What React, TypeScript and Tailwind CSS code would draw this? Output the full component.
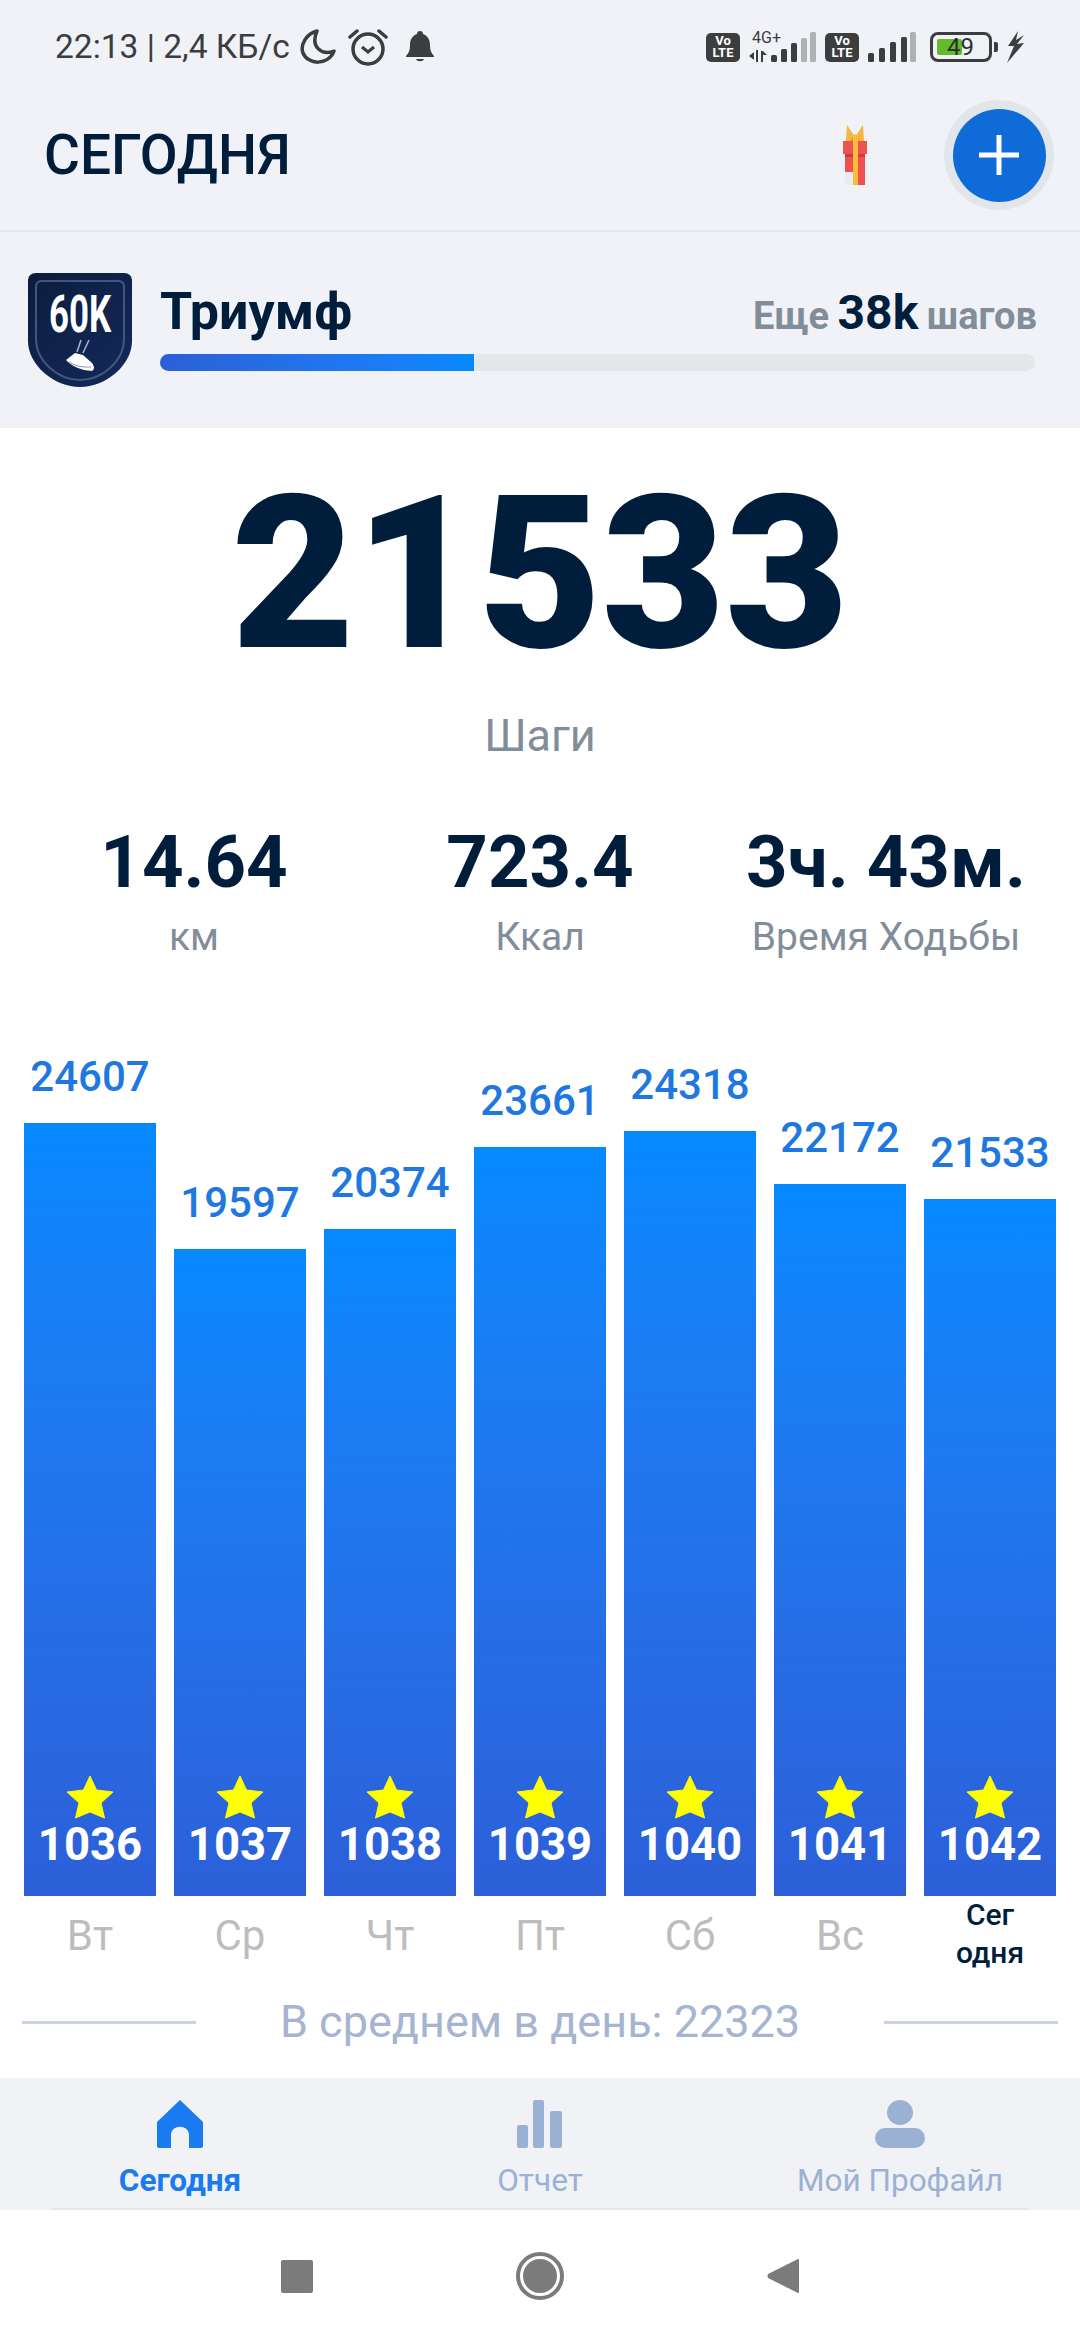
const days = [
  { value: 24607, height: 773, num: 1036, label: "Вт" },
  { value: 19597, height: 647, num: 1037, label: "Ср" },
  { value: 20374, height: 667, num: 1038, label: "Чт" },
  { value: 23661, height: 749, num: 1039, label: "Пт" },
  { value: 24318, height: 765, num: 1040, label: "Сб" },
  { value: 22172, height: 712, num: 1041, label: "Вс" },
  { value: 21533, height: 697, num: 1042, label: "" },
];

const stats = [
  { value: "14.64", label: "км" },
  { value: "723.4", label: "Ккал" },
  { value: "3ч. 43м.", label: "Время Ходьбы" },
];

function VoLte() {
  return (
    <div className="flex h-[29px] w-[34px] flex-col items-center justify-center rounded-[5px] bg-[#3c3d3f] text-[13px] leading-[12px] font-bold text-white">
      <span>Vo</span>
      <span>LTE</span>
    </div>
  );
}

function Signal() {
  const bars = [
    { x: 0, h: 9, fill: "#3c3d3f" },
    { x: 11, h: 14, fill: "#3c3d3f" },
    { x: 22, h: 20, fill: "#3c3d3f" },
    { x: 33, h: 25, fill: "#3c3d3f" },
    { x: 42, h: 30, fill: "#b0b1b3" },
  ];
  return (
    <svg width="48" height="30" viewBox="0 0 48 30">
      {bars.map((b) => (
        <rect key={b.x} x={b.x} y={30 - b.h} width="6" height={b.h} rx="1.5" fill={b.fill} />
      ))}
    </svg>
  );
}

function StatusBar() {
  return (
    <div className="flex h-[92px] items-center pt-[2px] pl-[55px] text-[#3c3d3f]">
      <span className="w-[245px] text-[33.5px] leading-none">22:13 | 2,4 КБ/с</span>
      <svg width="36" height="36" viewBox="0 0 36 36" fill="none">
        <path
          d="M17 2 C6 5 0 16 3 24 C8 36 28 37 34 22 C22 27 10 18 17 2 Z"
          stroke="#3c3d3f"
          strokeWidth="3.5"
          strokeLinejoin="round"
        />
      </svg>
      <svg className="ml-[12px]" width="40" height="38" viewBox="0 0 40 38" fill="none">
        <circle cx="20" cy="21" r="15" stroke="#3c3d3f" strokeWidth="3.5" />
        <path d="M14 19 L20 24 L26 19" stroke="#3c3d3f" strokeWidth="3" />
        <path d="M2 9 L9 3 M38 9 L31 3" stroke="#3c3d3f" strokeWidth="3.5" strokeLinecap="round" />
      </svg>
      <svg className="ml-[18px]" width="28" height="32" viewBox="0 0 28 32">
        <path
          d="M14 0 C16 0 17 1 17 3 C22 5 24 9 24 14 C24 19 25 22 28 25 L28 26 L0 26 L0 25 C3 22 4 19 4 14 C4 9 6 5 11 3 C11 1 12 0 14 0 Z M10 28 L18 28 C17 31 11 31 10 28 Z"
          fill="#3c3d3f"
        />
      </svg>
      <div className="ml-auto flex items-center pr-[55px]">
        <VoLte />
        <div className="relative ml-[9px] h-[30px] w-[67px]">
          <span className="absolute -top-[2px] left-[3px] text-[16px] leading-none">4G+</span>
          <svg className="absolute bottom-0 left-0" width="22" height="12" viewBox="0 0 22 12">
            <path d="M0 6 L5 2 L5 10 Z M7 0 L9 0 L9 12 L7 12 Z M12 1 L14 1 L18 5 L14 5 L14 12 L12 12 Z" fill="#3c3d3f" />
          </svg>
          <svg className="absolute right-0 bottom-0" width="45" height="30" viewBox="0 0 45 30">
            <rect x="0" y="23" width="6" height="7" rx="1.5" fill="#3c3d3f" />
            <rect x="10" y="17" width="6" height="13" rx="1.5" fill="#3c3d3f" />
            <rect x="20" y="11" width="6" height="19" rx="1.5" fill="#3c3d3f" />
            <rect x="30" y="6" width="6" height="24" rx="1.5" fill="#b0b1b3" />
            <rect x="39" y="0" width="6" height="30" rx="1.5" fill="#b0b1b3" />
          </svg>
        </div>
        <div className="ml-[9px]">
          <VoLte />
        </div>
        <div className="ml-[9px] flex">
          <Signal />
        </div>
        <div className="relative ml-[14px] h-[30px] w-[62px] rounded-[8px] border-[3px] border-[#3c3d3f]">
          <div className="absolute top-[4px] bottom-[4px] left-[4px] w-[25px] rounded-[2px] bg-[#62bb2c]" />
          <span className="absolute top-0 left-[14px] text-[24px] leading-[24px] text-[#2d2e30]">49</span>
        </div>
        <div className="ml-[2px] h-[10px] w-[4px] rounded-r-[2px] bg-[#3c3d3f]" />
        <svg className="ml-[9px]" width="18" height="32" viewBox="0 0 18 32">
          <path d="M11 0 L1 15 L7 15 L0 32 L17 12 L10 13 L17 4 L9 9 Z" fill="#3c3d3f" />
        </svg>
      </div>
    </div>
  );
}

function Gift() {
  return (
    <svg width="24" height="60" viewBox="0 0 24 60">
      <path d="M3 16 L4 0 L12 12 L20 0 L21 16 Z" fill="#f4b63d" />
      <path d="M7 17 L12 9 L17 17 Z" fill="#e0932c" />
      <rect x="2" y="23" width="20" height="37" fill="#f0504f" />
      <rect x="0" y="16" width="24" height="13" fill="#ee5253" />
      <rect x="2" y="29" width="20" height="3" fill="#c93c3f" />
      <rect x="10" y="10" width="5" height="50" fill="#f8bd3a" />
      <rect x="2" y="47" width="8" height="13" fill="#e9ecef" />
    </svg>
  );
}

function Badge() {
  return (
    <div className="relative h-[114px] w-[104px] shrink-0">
      <svg width="104" height="114" viewBox="0 0 104 114">
        <defs>
          <linearGradient id="shield" x1="0" y1="0" x2="1" y2="1">
            <stop offset="0" stopColor="#0b1d3d" />
            <stop offset="1" stopColor="#14295c" />
          </linearGradient>
        </defs>
        <path
          d="M8 0 L96 0 C101 0 104 3 104 8 L104 68 C104 92 78 114 52 114 C26 114 0 92 0 68 L0 8 C0 3 3 0 8 0 Z"
          fill="url(#shield)"
        />
        <path
          d="M14 8 L90 8 C94 8 96 10 96 14 L96 66 C96 88 74 107 52 107 C30 107 8 88 8 66 L8 14 C8 10 10 8 14 8 Z"
          fill="none"
          stroke="#46567a"
          strokeWidth="2"
        />
        <path d="M47 80 L55 82 L64 90 Q68 95 64 98 L56 97 Q44 94 38 87 Z" fill="#ffffff" />
        <path d="M41 89 Q50 95 63 94" fill="none" stroke="#8a96b0" strokeWidth="1" />
        <path d="M49 79 L53 67 M55 80 L61 67" stroke="#aeb6c8" strokeWidth="1.5" />
      </svg>
      <div className="absolute top-[10px] left-0 w-full scale-x-[0.67] text-center text-[52px] leading-[64px] font-bold text-white">
        60K
      </div>
    </div>
  );
}

function Star() {
  return (
    <svg width="48" height="44" viewBox="0 0 48 44">
      <path
        d="M24 1 L30.5 15 L47 17 L35 28 L38.5 43 L24 37 L9.5 43 L13 28 L1 17 L17.5 15 Z"
        fill="#ffff00"
        stroke="#ffff00"
        strokeWidth="1"
        strokeLinejoin="round"
      />
    </svg>
  );
}

function Chart() {
  return (
    <div className="flex h-[846px] items-end gap-[18px] px-[24px]">
      {days.map((d) => (
        <div key={d.num} className="flex w-[132px] flex-col items-center">
          <span className="mb-[14px] text-[42px] leading-[64px] font-medium text-[#1f78e0]">{d.value}</span>
          <div
            className="flex w-full flex-col items-center justify-end bg-gradient-to-b from-[#0589ff] to-[#2c5fd8] pb-[25px]"
            style={{ height: d.height }}
          >
            <Star />
            <span className="text-[45.5px] leading-[52px] font-bold text-white">{d.num}</span>
          </div>
        </div>
      ))}
    </div>
  );
}

function Nav() {
  return (
    <nav className="relative grid h-[132px] grid-cols-3 bg-[#f0f2f5] pt-[22px]">
      <div className="flex flex-col items-center">
        <svg width="48" height="48" viewBox="0 0 48 48">
          <path
            d="M24 0 L47 22 L47 46 Q47 48 45 48 L33 48 L33 35 C33 24 15 24 15 35 L15 48 L3 48 Q1 48 1 46 L1 22 Z"
            fill="#1a7af0"
          />
        </svg>
        <span className="mt-[11px] text-[31.5px] leading-[44px] font-bold text-[#1a7af0]">Сегодня</span>
      </div>
      <div className="flex flex-col items-center">
        <svg width="46" height="48" viewBox="0 0 46 48" fill="#9bb1d3">
          <rect x="0" y="25" width="11" height="23" rx="2" />
          <rect x="16" y="0" width="11" height="48" rx="2" />
          <rect x="33" y="11" width="12" height="37" rx="2" />
        </svg>
        <span className="mt-[11px] text-[31.5px] leading-[44px] text-[#9bb1d3]">Отчет</span>
      </div>
      <div className="flex flex-col items-center">
        <svg width="50" height="48" viewBox="0 0 50 48" fill="#9bb1d3">
          <ellipse cx="25" cy="12.5" rx="13" ry="12.5" />
          <rect x="0" y="28" width="50" height="20" rx="10" />
        </svg>
        <span className="mt-[11px] text-[31.5px] leading-[44px] text-[#9bb1d3]">Мой Профайл</span>
      </div>
      <div className="absolute right-[52px] bottom-0 left-[52px] h-[2px] bg-[#e4e6e9]" />
    </nav>
  );
}

export default function App() {
  return (
    <div className="flex h-[2340px] w-[1080px] flex-col bg-white font-['Roboto',sans-serif]">
      <div className="bg-[#f0f2f7]">
        <StatusBar />
        <header className="flex h-[140px] items-center border-b-2 border-[#e6e8ec] pb-[12px] pl-[44px]">
          <h1 className="text-[55px] leading-none font-medium text-[#001e3c]">СЕГОДНЯ</h1>
          <div className="mr-[26px] ml-auto flex items-center gap-[77px]">
            <Gift />
            <div className="flex h-[110px] w-[110px] items-center justify-center rounded-full bg-[#e2e5ea]">
              <div className="flex h-[93px] w-[93px] items-center justify-center rounded-full bg-[#0e6bd8]">
                <svg width="40" height="40" viewBox="0 0 40 40">
                  <path d="M20 0 L20 40 M0 20 L40 20" stroke="#ffffff" strokeWidth="5" />
                </svg>
              </div>
            </div>
          </div>
        </header>

        <section className="flex h-[196px] gap-[28px] pt-[41px] pl-[28px]">
          <Badge />
          <div className="w-[875px]">
            <div className="mt-[4px] flex h-[68px] items-baseline justify-between">
              <span className="text-[52px] leading-[64px] font-bold text-[#001e3c]">Триумф</span>
              <span className="-mr-[2px] text-[38px] font-bold text-[#828d9a] [word-spacing:-1px]">
                Еще <span className="text-[48px] text-[#001e3c]">38k</span> шагов
              </span>
            </div>
            <div className="mt-[9px] h-[17px] w-full rounded-full bg-[#e4e6e9]">
              <div className="h-full w-[314px] rounded-l-full bg-gradient-to-r from-[#2c5fd8] to-[#0589ff]" />
            </div>
          </div>
        </section>
      </div>

      <main className="flex flex-1 flex-col">
        <div className="mt-[42px] text-center text-[213px] leading-[208px] font-black text-[#001e3c]">21533</div>
        <div className="mt-[33px] text-center text-[45px] leading-[50px] text-[#828d9a]">Шаги</div>

        <div className="mt-[62px] grid grid-cols-3 px-[21px]">
          {stats.map((s) => (
            <div key={s.label} className="flex flex-col items-center">
              <span className="text-[72.5px] leading-[80px] font-bold text-[#001e3c]">{s.value}</span>
              <span className="mt-[9px] text-[39px] leading-[50px] text-[#828d9a]">{s.label}</span>
            </div>
          ))}
        </div>

        <div className="mt-[88px]">
          <Chart />
        </div>

        <div className="grid grid-cols-7 gap-[18px] px-[24px] text-center">
          {days.map((d) =>
            d.label ? (
              <span key={d.num} className="pt-[16px] text-[42px] leading-[48px] text-[#bdbdbd]">
                {d.label}
              </span>
            ) : (
              <span key={d.num} className="text-[30px] leading-[38px] font-medium text-[#001e3c]">
                Сег
                <br />
                одня
              </span>
            ),
          )}
        </div>

        <div className="mt-[24px] flex items-center justify-between px-[22px]">
          <div className="h-[3px] w-[174px] bg-[#c9d3e3]" />
          <span className="text-[45px] leading-[52px] text-[#a5b4d0]">В среднем в день: 22323</span>
          <div className="h-[3px] w-[174px] bg-[#c9d3e3]" />
        </div>
      </main>

      <Nav />

      <div className="flex h-[130px] items-center justify-center gap-[203px] bg-white pt-[2px]">
        <div className="h-[33px] w-[32px] rounded-[2px] bg-[#7b7b7b]" />
        <div className="flex h-[48px] w-[48px] items-center justify-center rounded-full border-[4px] border-[#7b7b7b]">
          <div className="h-[34px] w-[34px] rounded-full bg-[#7b7b7b]" />
        </div>
        <svg width="32" height="36" viewBox="0 0 32 36">
          <path d="M31 1 Q32 0 32 3 L32 33 Q32 36 31 35 L1 20 Q0 18 1 16 Z" fill="#7b7b7b" />
        </svg>
      </div>
    </div>
  );
}
